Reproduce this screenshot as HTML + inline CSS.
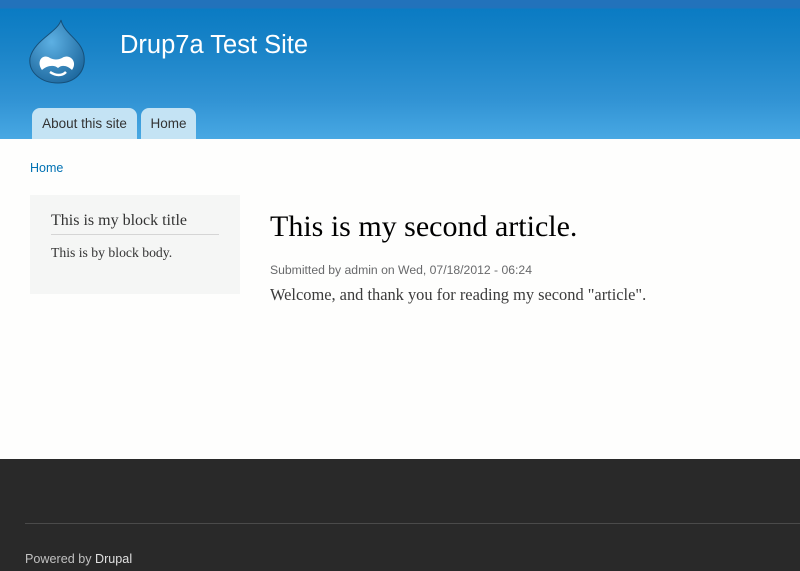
<!DOCTYPE html>
<html><head><style>
body{margin:0;width:800px;height:571px;overflow:hidden;background:#fefefd;font-family:"Liberation Sans",sans-serif;}
#h{position:absolute;left:0;top:0;width:800px;height:139px;background:linear-gradient(#2272bb 0,#2272bb 8px,#0a7bc3 9px,#1a84c8 50px,#3193d4 100px,#48a8e3 139px);}
#t{position:absolute;left:120px;top:31px;color:#fff;font-size:25.5px;}
.tab{position:absolute;top:108px;height:31px;background:#c4e3f4;border-radius:8px 8px 0 0;color:#333;font-size:13.5px;line-height:31px;text-align:center;}
#bc{position:absolute;left:30px;top:161px;color:#0071b3;font-size:12.5px;}
#sb{position:absolute;left:30px;top:195px;width:210px;height:99px;background:#f5f6f5;}
.serif{font-family:"Liberation Serif",serif;}
#sb h2{position:absolute;left:21px;top:17px;margin:0;font-weight:normal;font-size:16px;color:#333;width:168px;border-bottom:1px solid #d5d5d5;padding-bottom:4px;}
#sb p{position:absolute;left:21px;top:50px;margin:0;font-size:13.7px;color:#333;}
#ti{position:absolute;left:270px;top:210px;font-size:30px;color:#000;}
#sub{position:absolute;left:270px;top:263px;font-size:12.2px;color:#68696b;}
#bd{position:absolute;left:270px;top:285px;font-size:16.4px;color:#3b3b3b;}
#f{position:absolute;left:0;top:459px;width:800px;height:112px;background:#292929;}
#f hr{position:absolute;left:25px;top:64px;width:775px;margin:0;border:0;border-top:1px solid #4a4a4a;}
#f div{position:absolute;left:25px;top:93px;font-size:12.6px;color:#c0c0c0;}
</style></head><body>
<div id="h">
<svg style="position:absolute;left:28px;top:18px" width="60" height="66" viewBox="0 0 60 66">
<defs><radialGradient id="g" cx="0.4" cy="0.35" r="0.7"><stop offset="0" stop-color="#5db0e3"/><stop offset="1" stop-color="#1f6aa0"/></radialGradient></defs>
<path d="M33 2 C30 14 6 22 2 40 C0 55 14 65 30 65 C47 65 58 54 56 38 C54 22 36 16 33 2Z" fill="url(#g)" stroke="#16507a" stroke-width="1"/>
<path d="M14 52 C8 44 14 35 22 40 C26 42 30 42 34 40 C42 35 50 44 44 52 C40 48 34 46 30 50 C26 46 18 48 14 52Z" fill="#fff"/>
<path d="M22 54 C28 58 34 58 38 54" stroke="#fff" stroke-width="2.5" fill="none"/>
</svg>
<div id="t">Drup7a Test Site</div>
<div class="tab" style="left:32px;width:105px">About this site</div>
<div class="tab" style="left:141px;width:55px">Home</div>
</div>
<div id="bc">Home</div>
<div id="sb"><h2 class="serif">This is my block title</h2><p class="serif">This is by block body.</p></div>
<div id="ti" class="serif">This is my second article.</div>
<div id="sub">Submitted by admin on Wed, 07/18/2012 - 06:24</div>
<div id="bd" class="serif">Welcome, and thank you for reading my second "article".</div>
<div id="f"><hr><div>Powered by <span style="color:#e0e0e0">Drupal</span></div></div>
</body></html>
